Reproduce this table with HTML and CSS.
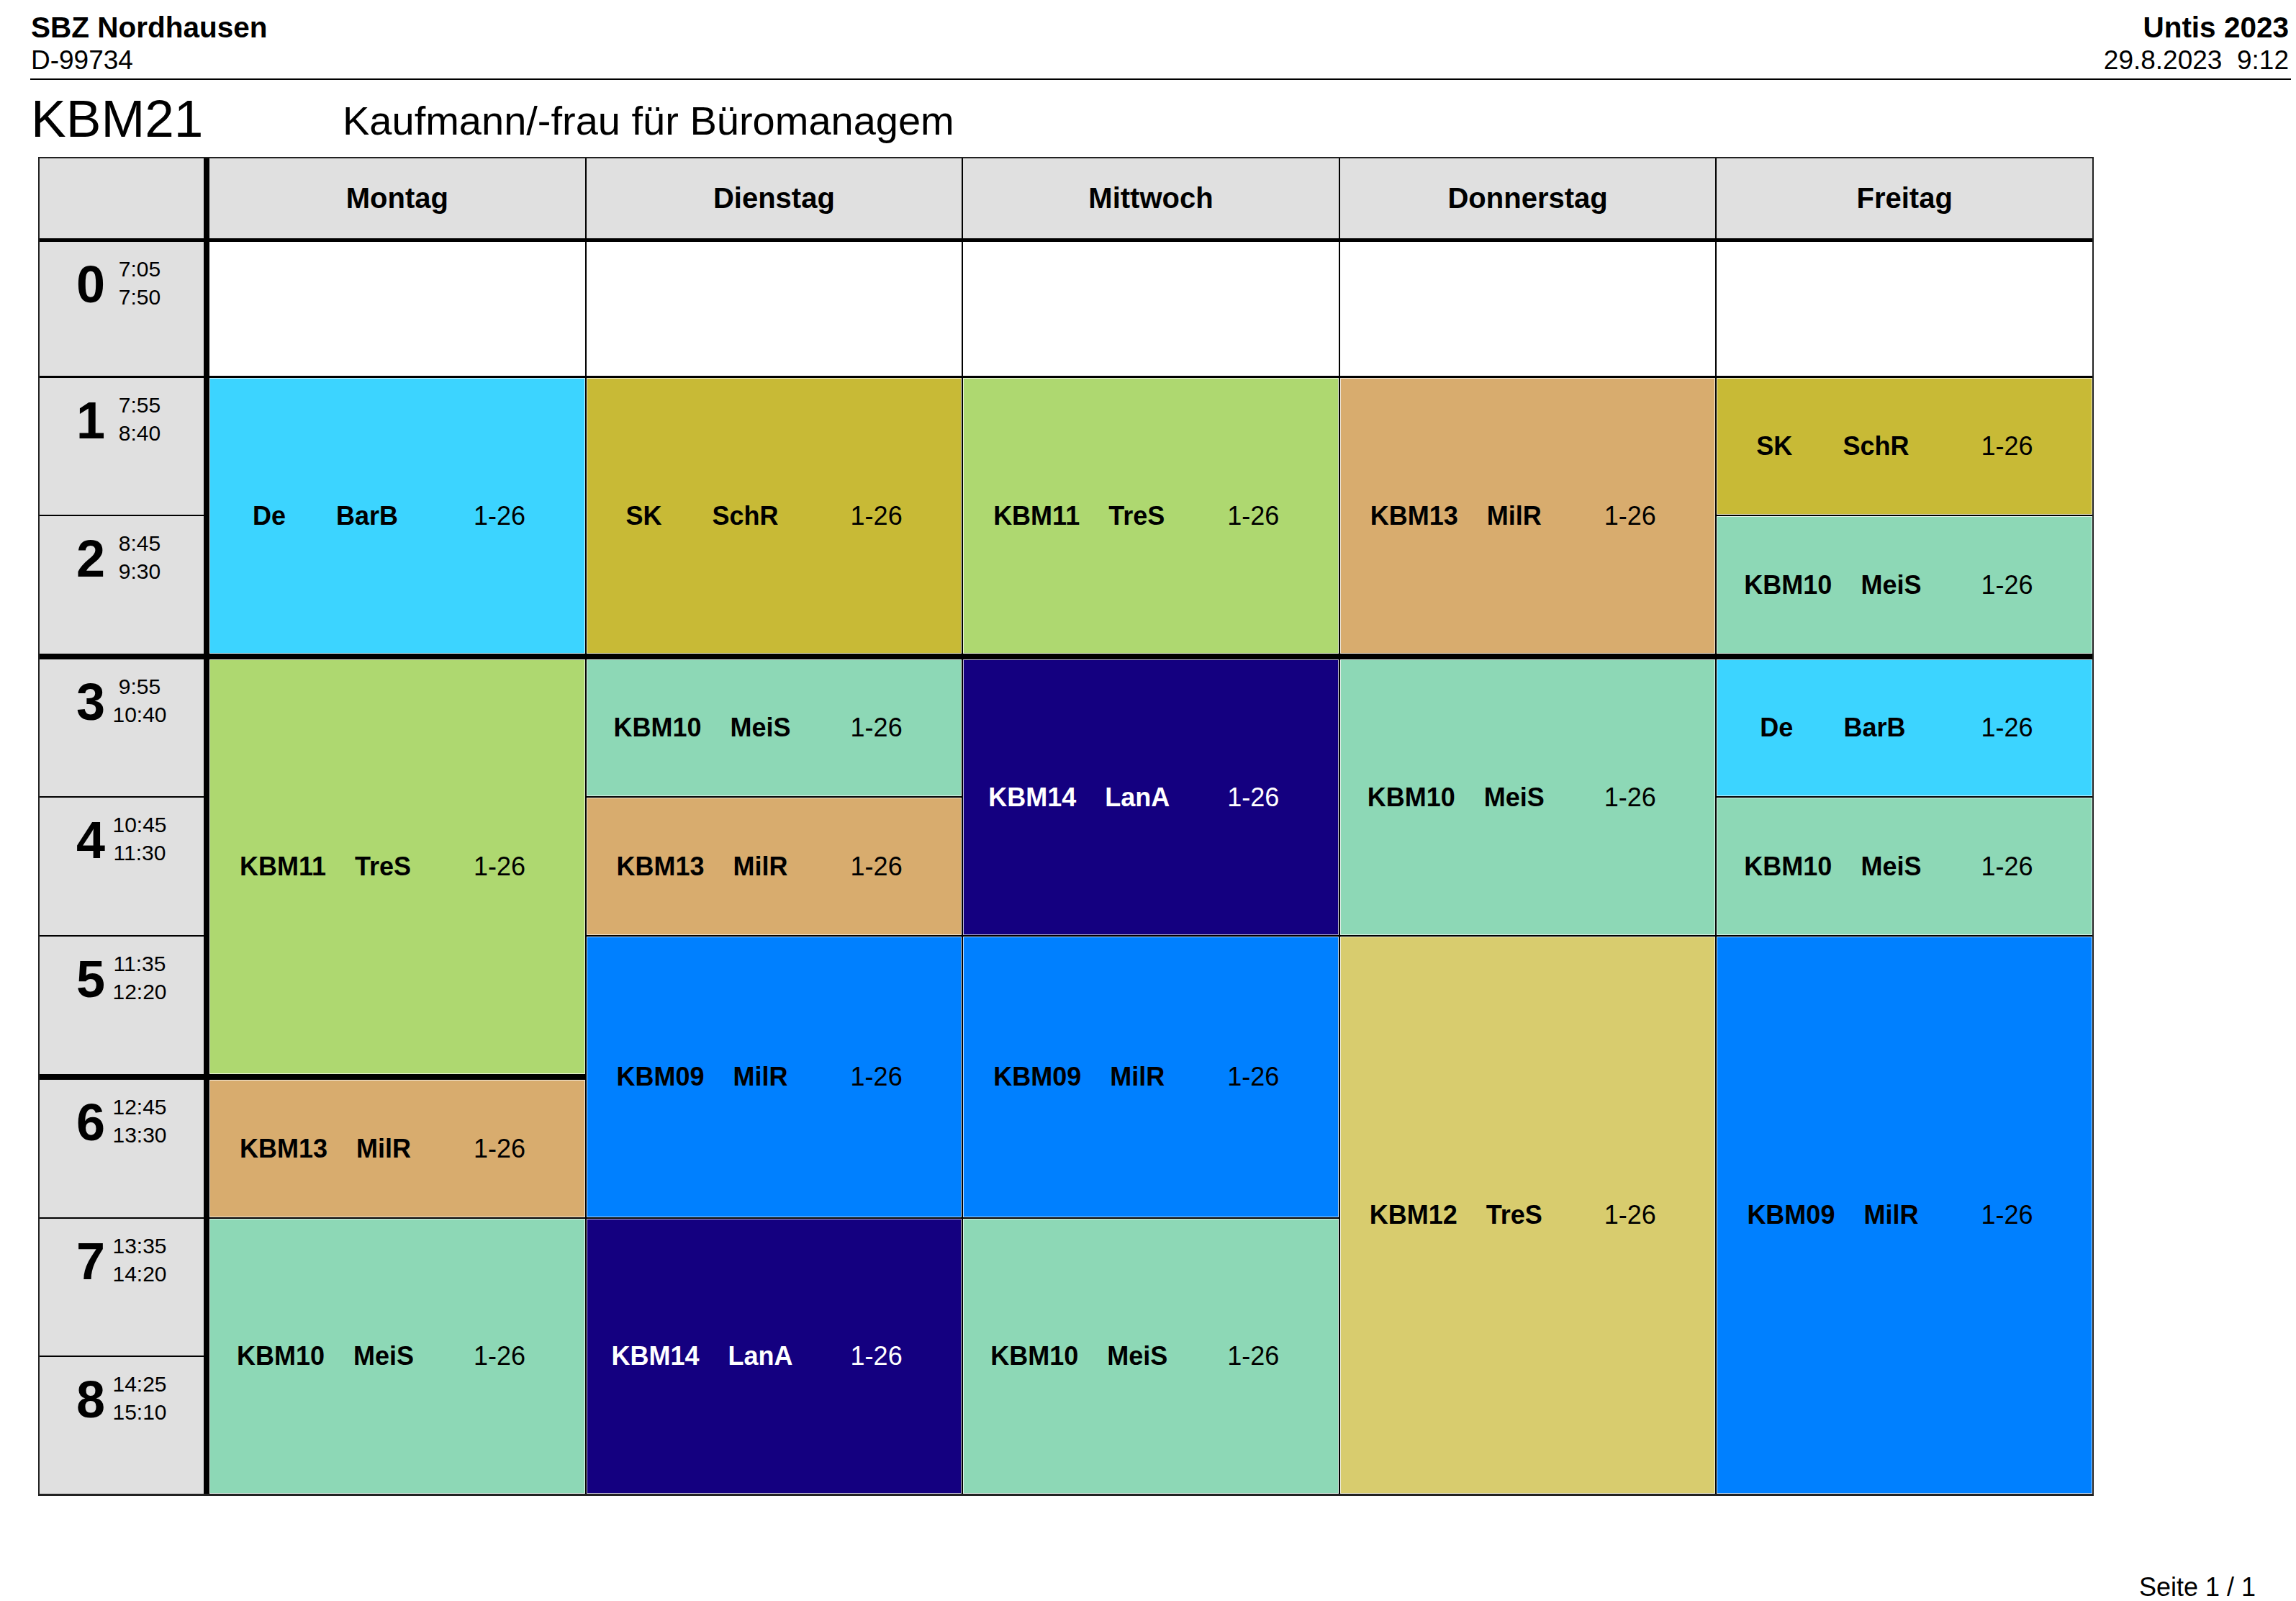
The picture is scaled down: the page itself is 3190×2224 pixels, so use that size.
FILE: index.html
```html
<!DOCTYPE html>
<html lang="de">
<head>
<meta charset="utf-8">
<title>KBM21 Stundenplan</title>
<link rel="stylesheet" href="styles.css">
</head>
<body>
<div class="page">
  <header class="top">
    <div class="top-left">
      <div class="org">SBZ Nordhausen</div>
      <div class="sub">D-99734</div>
    </div>
    <div class="top-right">
      <div class="org">Untis 2023</div>
      <div class="sub">29.8.2023  9:12</div>
    </div>
  </header>
  <div class="title">
    <div class="klasse">KBM21</div>
    <div class="beruf">Kaufmann/-frau für Büromanagem</div>
  </div>

  <div class="plan">
    <div class="hd c-t"></div>
    <div class="hd c-mo">Montag</div>
    <div class="hd c-di">Dienstag</div>
    <div class="hd c-mi">Mittwoch</div>
    <div class="hd c-do">Donnerstag</div>
    <div class="hd c-fr">Freitag</div>

    <div class="tm r0"><span class="num">0</span><span class="times">7:05<br>7:50</span></div>
    <div class="tm r1"><span class="num">1</span><span class="times">7:55<br>8:40</span></div>
    <div class="tm r2"><span class="num">2</span><span class="times">8:45<br>9:30</span></div>
    <div class="tm r3"><span class="num">3</span><span class="times">9:55<br>10:40</span></div>
    <div class="tm r4"><span class="num">4</span><span class="times">10:45<br>11:30</span></div>
    <div class="tm r5"><span class="num">5</span><span class="times">11:35<br>12:20</span></div>
    <div class="tm r6"><span class="num">6</span><span class="times">12:45<br>13:30</span></div>
    <div class="tm r7"><span class="num">7</span><span class="times">13:35<br>14:20</span></div>
    <div class="tm r8"><span class="num">8</span><span class="times">14:25<br>15:10</span></div>

    <div class="empty c-mo r0"></div>
    <div class="empty c-di r0"></div>
    <div class="empty c-mi r0"></div>
    <div class="empty c-do r0"></div>
    <div class="empty c-fr r0"></div>

    <!-- Montag -->
    <div class="ls cyan c-mo r1-2"><span class="main">De       BarB</span><span class="wk">1-26</span></div>
    <div class="ls green c-mo r3-5"><span class="main">KBM11    TreS</span><span class="wk">1-26</span></div>
    <div class="ls tan c-mo r6"><span class="main">KBM13    MilR</span><span class="wk">1-26</span></div>
    <div class="ls mint c-mo r7-8"><span class="main">KBM10    MeiS</span><span class="wk">1-26</span></div>

    <!-- Dienstag -->
    <div class="ls olive c-di r1-2"><span class="main">SK       SchR</span><span class="wk">1-26</span></div>
    <div class="ls mint c-di r3"><span class="main">KBM10    MeiS</span><span class="wk">1-26</span></div>
    <div class="ls tan c-di r4"><span class="main">KBM13    MilR</span><span class="wk">1-26</span></div>
    <div class="ls blue c-di r5-6"><span class="main">KBM09    MilR</span><span class="wk">1-26</span></div>
    <div class="ls navy c-di r7-8"><span class="main">KBM14    LanA</span><span class="wk">1-26</span></div>

    <!-- Mittwoch -->
    <div class="ls green c-mi r1-2"><span class="main">KBM11    TreS</span><span class="wk">1-26</span></div>
    <div class="ls navy c-mi r3-4"><span class="main">KBM14    LanA</span><span class="wk">1-26</span></div>
    <div class="ls blue c-mi r5-6"><span class="main">KBM09    MilR</span><span class="wk">1-26</span></div>
    <div class="ls mint c-mi r7-8"><span class="main">KBM10    MeiS</span><span class="wk">1-26</span></div>

    <!-- Donnerstag -->
    <div class="ls tan c-do r1-2"><span class="main">KBM13    MilR</span><span class="wk">1-26</span></div>
    <div class="ls mint c-do r3-4"><span class="main">KBM10    MeiS</span><span class="wk">1-26</span></div>
    <div class="ls khaki c-do r5-8"><span class="main">KBM12    TreS</span><span class="wk">1-26</span></div>

    <!-- Freitag -->
    <div class="ls olive c-fr r1"><span class="main">SK       SchR</span><span class="wk">1-26</span></div>
    <div class="ls mint c-fr r2"><span class="main">KBM10    MeiS</span><span class="wk">1-26</span></div>
    <div class="ls cyan c-fr r3"><span class="main">De       BarB</span><span class="wk">1-26</span></div>
    <div class="ls mint c-fr r4"><span class="main">KBM10    MeiS</span><span class="wk">1-26</span></div>
    <div class="ls blue c-fr r5-8"><span class="main">KBM09    MilR</span><span class="wk">1-26</span></div>
  </div>

  <footer class="foot">Seite 1 / 1</footer>
</div>
</body>
</html>
```

FILE: styles.css
```css
* { box-sizing: border-box; }

html, body {
  margin: 0;
  padding: 0;
  background: #fff;
}

body {
  font-family: "Liberation Sans", Arial, Helvetica, sans-serif;
  color: #000;
}

.page {
  width: 3190px;
  padding: 16px 7px 0 42px;
}

/* ---------- header ---------- */
.top {
  display: flex;
  justify-content: space-between;
  padding: 0 3px 3px 1px;
  border-bottom: 2px solid #000;
}

.top-right { text-align: right; }

.org {
  font-size: 40.5px;
  font-weight: bold;
  line-height: 45px;
}

.sub {
  font-size: 37px;
  line-height: 45px;
  white-space: pre;
}

.title {
  display: flex;
  align-items: flex-start;
  height: 80px;
  margin-top: 14px;
  padding-left: 1px;
}

.klasse {
  width: 433px;
  font-size: 73px;
  line-height: 80px;
}

.beruf {
  margin-top: 6px;
  font-size: 56px;
  line-height: 74px;
}

/* ---------- timetable grid ---------- */
.plan {
  display: grid;
  width: 2856px;
  margin: 13px 0 0 11px;
  border: 2px solid #222;
  border-bottom-width: 3px;
  background: #000;
  grid-template-columns: 228px 8px 1fr 2px 1fr 2px 1fr 2px 1fr 2px 1fr;
  grid-template-rows:
    111px 5px
    186px 3px
    190px 2px
    191px 8px
    190px 2px
    191px 2px
    191px 8px
    191px 2px
    190px 2px
    190px;
}

.hd {
  grid-row: 1;
  background: #e0e0e0;
  display: flex;
  align-items: center;
  justify-content: center;
  font-size: 40px;
  font-weight: bold;
}

.c-t  { grid-column: 1; }
.c-mo { grid-column: 3; }
.c-di { grid-column: 5; }
.c-mi { grid-column: 7; }
.c-do { grid-column: 9; }
.c-fr { grid-column: 11; }

.r0 { grid-row: 3; }
.r1 { grid-row: 5; }
.r2 { grid-row: 7; }
.r3 { grid-row: 9; }
.r4 { grid-row: 11; }
.r5 { grid-row: 13; }
.r6 { grid-row: 15; }
.r7 { grid-row: 17; }
.r8 { grid-row: 19; }

.r1-2 { grid-row: 5 / 8; }
.r3-4 { grid-row: 9 / 12; }
.r3-5 { grid-row: 9 / 14; }
.r5-6 { grid-row: 13 / 16; }
.r5-8 { grid-row: 13 / 20; }
.r7-8 { grid-row: 17 / 20; }

/* time column */
.tm {
  grid-column: 1;
  background: #e0e0e0;
  display: flex;
  align-items: flex-start;
  padding: 18px 0 0 51px;
}

.num {
  width: 40px;
  margin-top: 5px;
  font-size: 72px;
  line-height: 72px;
  font-weight: bold;
}

.times {
  width: 90px;
  margin-left: 3px;
  text-align: center;
  font-size: 30px;
  line-height: 39px;
}

.empty { background: #fff; }

/* lessons */
.ls {
  display: flex;
  align-items: center;
  font-size: 36px;
  line-height: 42px;
  box-shadow: inset 0 0 0 1px rgba(255, 255, 255, 0.75);
}

.main {
  width: 322px;
  text-align: center;
  font-weight: bold;
  white-space: pre;
}

.wk {
  margin-left: 45px;
  white-space: nowrap;
}

.cyan  { background: #3cd4ff; }
.olive { background: #c8ba36; }
.green { background: #aed870; }
.tan   { background: #d8ac6e; }
.mint  { background: #8dd8b6; }
.navy  { background: #140080; color: #fff; }
.blue  { background: #0080ff; }
.khaki { background: #d8cc6e; }

/* footer */
.foot {
  margin-top: 107px;
  padding-right: 49px;
  text-align: right;
  font-size: 36px;
  line-height: 40px;
}
```
